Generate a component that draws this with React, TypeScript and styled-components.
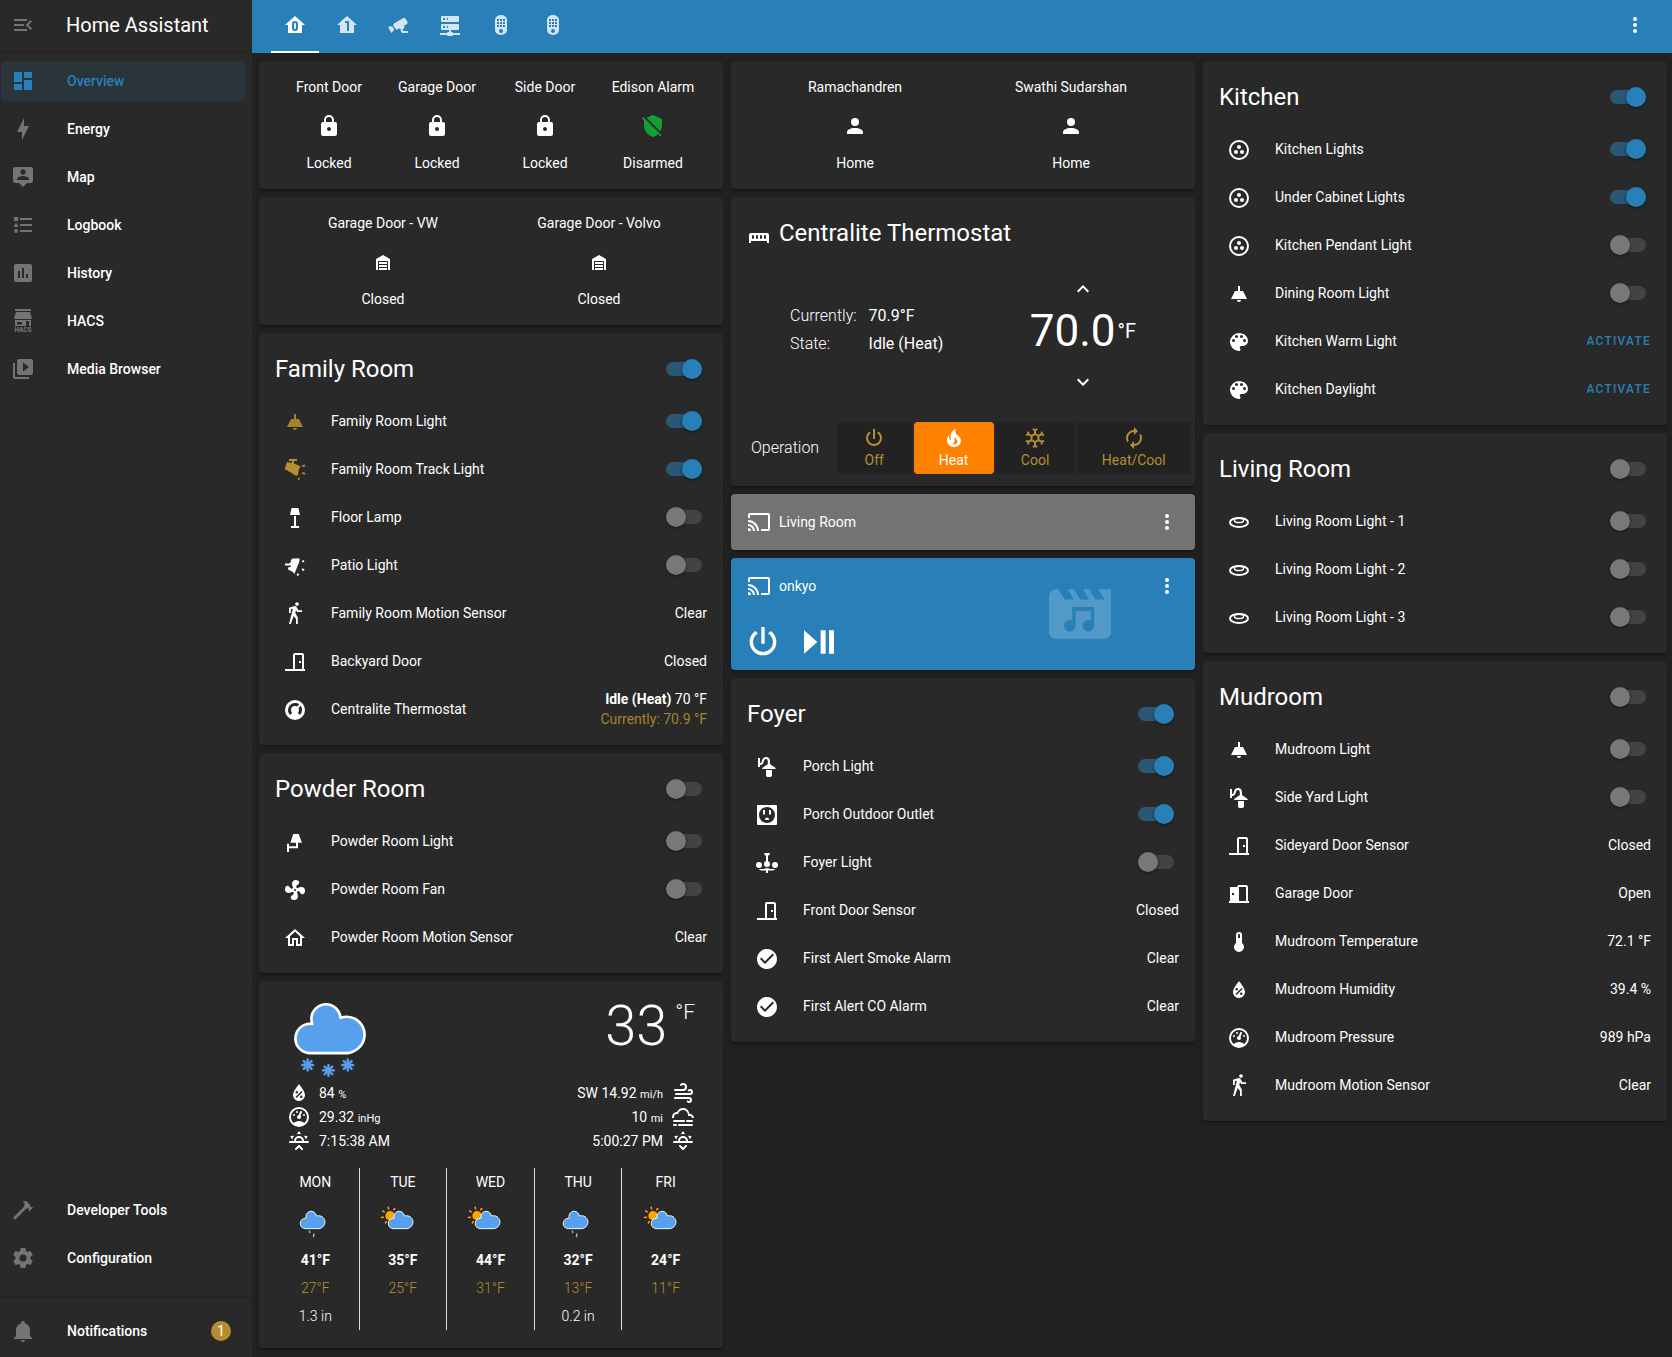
import React, { useId } from "react";
import styled, { createGlobalStyle, css } from "styled-components";

const color = {
  page: "#212121",
  card: "#292929",
  primary: "#2980b9",
  text: "#ffffff",
  muted: "#747474",
  gold: "#b58e31",
  goldDim: "#a5822c",
  green: "#12a035",
  line: "#222222",
};

const GlobalStyle = createGlobalStyle`
  * { box-sizing: border-box; }
  body {
    margin: 0;
    background: ${color.page};
    color: ${color.text};
    font-family: Roboto, "Liberation Sans", sans-serif;
    font-size: 14px;
    line-height: 20px;
  }
  h1, h2, p, ul, dl, dd { margin: 0; padding: 0; font-weight: 400; }
  ul { list-style: none; }
  button { font: inherit; color: inherit; background: none; border: 0; padding: 0; cursor: pointer; }
  a { color: inherit; text-decoration: none; }
`;

/* ---------- icons (24 × 24 grid) ---------- */

const paths: Record<string, string> = {
  menuOpen:
    "M21,15.61L19.59,17L14.58,12L19.59,7L21,8.39L17.44,12L21,15.61M3,6H16V8H3V6M3,13V11H13V13H3M3,18V16H16V18H3Z",
  dashboard: "M13,3V9H21V3M13,21H21V11H13M3,21H11V15H3M3,13H11V3H3V13Z",
  bolt: "M11 15H6L13 1V9H18L11 23V15Z",
  map: "M20,2H4A2,2 0 0,0 2,4V16A2,2 0 0,0 4,18H8L12,22L16,18H20A2,2 0 0,0 22,16V4A2,2 0 0,0 20,2M12,4.3C13.5,4.3 14.7,5.5 14.7,7C14.7,8.5 13.5,9.7 12,9.7C10.5,9.7 9.3,8.5 9.3,7C9.3,5.5 10.5,4.3 12,4.3M18,15H6V14.1C6,12.1 10,11 12,11C14,11 18,12.1 18,14.1V15Z",
  logbook:
    "M5,9.5L7.5,14H2.5L5,9.5M3,4H7V8H3V4M5,20A2,2 0 0,0 7,18A2,2 0 0,0 5,16A2,2 0 0,0 3,18A2,2 0 0,0 5,20M9,5V7H21V5H9M9,19H21V17H9V19M9,13H21V11H9V13Z",
  history:
    "M9 17H7V10H9V17M13 17H11V7H13V17M17 17H15V13H17V17M19 3H5C3.89 3 3 3.89 3 5V19A2 2 0 0 0 5 21H19A2 2 0 0 0 21 19V5A2 2 0 0 0 19 3Z",
  media:
    "M4,6H2V20A2,2 0 0,0 4,22H18V20H4V6M20,2H8A2,2 0 0,0 6,4V16A2,2 0 0,0 8,18H20A2,2 0 0,0 22,16V4A2,2 0 0,0 20,2M12,14.5V5.5L18,10L12,14.5Z",
  hammer:
    "M2,19.63L13.43,8.2L12.72,7.5L14.14,6.07L12,3.89C13.2,2.7 15.09,2.7 16.27,3.89L19.87,7.5L18.45,8.91H21.29L22,9.62L18.45,13.21L17.74,12.5V9.62L16.27,11.04L15.56,10.33L4.13,21.76L2,19.63Z",
  cog: "M12,15.5A3.5,3.5 0 0,1 8.5,12A3.5,3.5 0 0,1 12,8.5A3.5,3.5 0 0,1 15.5,12A3.5,3.5 0 0,1 12,15.5M19.43,12.97C19.47,12.65 19.5,12.33 19.5,12C19.5,11.67 19.47,11.34 19.43,11L21.54,9.37C21.73,9.22 21.78,8.95 21.66,8.73L19.66,5.27C19.54,5.05 19.27,4.96 19.05,5.05L16.56,6.05C16.04,5.66 15.5,5.32 14.87,5.07L14.5,2.42C14.46,2.18 14.25,2 14,2H10C9.75,2 9.54,2.18 9.5,2.42L9.13,5.07C8.5,5.32 7.96,5.66 7.44,6.05L4.95,5.05C4.73,4.96 4.46,5.05 4.34,5.27L2.34,8.73C2.21,8.95 2.27,9.22 2.46,9.37L4.57,11C4.53,11.34 4.5,11.67 4.5,12C4.5,12.33 4.53,12.65 4.57,12.97L2.46,14.63C2.27,14.78 2.21,15.05 2.34,15.27L4.34,18.73C4.46,18.95 4.73,19.03 4.95,18.95L7.44,17.94C7.96,18.34 8.5,18.68 9.13,18.93L9.5,21.58C9.54,21.82 9.75,22 10,22H14C14.25,22 14.46,21.82 14.5,21.58L14.87,18.93C15.5,18.67 16.04,18.34 16.56,17.94L19.05,18.95C19.27,19.03 19.54,18.95 19.66,18.73L21.66,15.27C21.78,15.05 21.73,14.78 21.54,14.63L19.43,12.97Z",
  bell: "M21,19V20H3V19L5,17V11C5,7.9 7.03,5.17 10,4.29C10,4.19 10,4.1 10,4A2,2 0 0,1 12,2A2,2 0 0,1 14,4C14,4.1 14,4.19 14,4.29C16.97,5.17 19,7.9 19,11V17L21,19M14,21A2,2 0 0,1 12,23A2,2 0 0,1 10,21",
  floor0:
    "M12,10A1,1 0 0,0 11,11V15A1,1 0 0,0 12,16A1,1 0 0,0 13,15V11A1,1 0 0,0 12,10M22,12H19V20H5V12H2L12,3L22,12M15,11A3,3 0 0,0 9,11V15A3,3 0 0,0 15,15V11Z",
  floor1: "M12,3L2,12H5V20H19V12H22L12,3M10,8H14V18H12V10H10V8Z",
  cctv: "M18.15,4.94C17.77,4.91 17.37,5 17,5.2L8.35,10.2C7.39,10.76 7.07,12 7.62,12.94L9.12,15.53C9.67,16.5 10.89,16.82 11.85,16.27L13.65,15.23C13.92,15.69 14.32,16.06 14.81,16.27V18.04C14.81,19.13 15.7,20 16.81,20H22V18.04H16.81V16.27C17.72,15.87 18.31,14.97 18.31,14C18.31,13.54 18.19,13.11 17.97,12.73L20.5,11.27C21.47,10.71 21.8,9.5 21.24,8.53L19.74,5.94C19.4,5.34 18.79,5 18.15,4.94M6.22,13.17L2,13.87L2.75,15.17L4.75,18.63L5.5,19.93L8.22,16.63L6.22,13.17Z",
  server:
    "M13,19H14A1,1 0 0,1 15,20H22V22H15A1,1 0 0,1 14,23H10A1,1 0 0,1 9,22H2V20H9A1,1 0 0,1 10,19H11V17H4A1,1 0 0,1 3,16V12A1,1 0 0,1 4,11H20A1,1 0 0,1 21,12V16A1,1 0 0,1 20,17H13V19M4,3H20A1,1 0 0,1 21,4V8A1,1 0 0,1 20,9H4A1,1 0 0,1 3,8V4A1,1 0 0,1 4,3M9,7H10V5H9V7M9,15H10V13H9V15M5,5V7H7V5H5M5,13V15H7V13H5Z",
  remote:
    "M12,2A6,5 0 0,1 18,7V17A6,5 0 0,1 6,17V7A6,5 0 0,1 12,2M8,6V8H10V6H8M11,6V8H13V6H11M14,6V8H16V6H14M8,9V11H10V9H8M11,9V11H13V9H11M14,9V11H16V9H14M8,12V14H10V12H8M11,12V14H13V12H11M14,12V14H16V12H14M12,16A2,2 0 1,0 12,20A2,2 0 1,0 12,16Z",
  dots: "M12,16A2,2 0 0,1 14,18A2,2 0 0,1 12,20A2,2 0 0,1 10,18A2,2 0 0,1 12,16M12,10A2,2 0 0,1 14,12A2,2 0 0,1 12,14A2,2 0 0,1 10,12A2,2 0 0,1 12,10M12,4A2,2 0 0,1 14,6A2,2 0 0,1 12,8A2,2 0 0,1 10,6A2,2 0 0,1 12,4Z",
  lock: "M12,17A2,2 0 0,0 14,15C14,13.89 13.1,13 12,13A2,2 0 0,0 10,15A2,2 0 0,0 12,17M18,8A2,2 0 0,1 20,10V20A2,2 0 0,1 18,22H6A2,2 0 0,1 4,20V10C4,8.89 4.9,8 6,8H7V6A5,5 0 0,1 12,1A5,5 0 0,1 17,6V8H18M12,3A3,3 0 0,0 9,6V8H15V6A3,3 0 0,0 12,3Z",
  shieldOff:
    "M1,4.27L2.28,3L20.5,21.22L19.23,22.5L17,20.25C15.57,21.6 13.87,22.54 12,23C6.84,21.74 3,16.55 3,11V6.27L1,4.27M12,1L21,5V11C21,13.28 20.35,15.5 19.23,17.41L5.65,3.82L12,1Z",
  garage:
    "M19,20H17V11H7V20H5V9L12,5L19,9V20M8,12H16V14H8V12M8,15H16V17H8V15M16,18V20H8V18H16Z",
  account:
    "M12,4A4,4 0 0,1 16,8A4,4 0 0,1 12,12A4,4 0 0,1 8,8A4,4 0 0,1 12,4M12,14C16.42,14 20,15.79 20,18V20H4V18C4,15.79 7.58,14 12,14Z",
  ceilingLight: "M8,9H11V4H13V9H16L20,17H4L8,9M14,18A2,2 0 0,1 12,20A2,2 0 0,1 10,18H14Z",
  trackLight:
    "M6,1H14V3H11V5.6L17.5,8.2L15.6,12.6L15.2,16.6L13.3,18L7.8,14.6L1.6,11L4,4L9,5V3H6V1M19,7.6L21.6,6.6L22.3,8.3L19.7,9.3L19,7.6M19.6,14L22.3,15L21.7,16.8L19,15.8L19.6,14M14.6,20L16.4,19.6L17,21.4L15.3,22L14.6,20Z",
  floorLamp: "M8.6,2H15.4L17,9H7L8.6,2M11,10H13V20H16V22H8V20H11V10Z",
  spotlight:
    "M9.5,4.6L16.6,4.4L16.4,7.5L11.4,20L9.6,17.8L5,15.4L5.2,13.4L8,12.6V11.5H2V9.5H6.6L7,8.4L8.2,8L7.6,6.4L9.5,4.6M14.2,4L16,4.6L15,6.4L14.2,4M18.8,7L20.6,5.9L21.5,7.4L19.6,8.4L18.8,7M19.2,14.2L21.6,15.2L20.9,17L18.7,16L19.2,14.2M13.6,20L15.2,19.2L16.2,21L14.6,22L13.6,20Z",
  walk: "M14.12,10H19V8.2H15.38L13.38,4.87C13.08,4.37 12.54,4.03 11.92,4.03C11.74,4.03 11.58,4.06 11.42,4.11L6,5.8V11H7.8V7.33L9.91,6.67L6,22H7.8L10.67,13.89L13,17V22H14.8V15.59L12.31,11.05L13.04,8.18M14,3.8C15,3.8 15.8,3 15.8,2C15.8,1 15,0.2 14,0.2C13,0.2 12.2,1 12.2,2C12.2,3 13,3.8 14,3.8Z",
  doorClosed:
    "M16,11H18V13H16V11M12,3H19C20.11,3 21,3.89 21,5V19H22V21H2V19H10V5C10,3.89 10.89,3 12,3M12,5V19H19V5H12Z",
  doorOpen:
    "M12,3C10.89,3 10,3.89 10,5H3V19H2V21H22V19H21V5C21,3.89 20.11,3 19,3H12M12,5H19V19H12V5M5,11H7V13H5V11Z",
  thermostat:
    "M16.95,16.95L14.83,14.83C15.55,14.1 16,13.1 16,12C16,11.26 15.79,10.57 15.43,10L17.6,7.81C18.5,9 19,10.43 19,12C19,13.93 18.22,15.68 16.95,16.95M12,5C13.57,5 15,5.5 16.19,6.4L14,8.56C13.43,8.21 12.74,8 12,8A4,4 0 0,0 8,12C8,13.1 8.45,14.1 9.17,14.83L7.05,16.95C5.78,15.68 5,13.93 5,12A7,7 0 0,1 12,5M12,2A10,10 0 0,0 2,12A10,10 0 0,0 12,22A10,10 0 0,0 22,12A10,10 0 0,0 12,2Z",
  sconce: "M10.3,4H15.7L19,12.8H15V18.3H6V22H4V13.8H6V16.3H13V12.8H7.3L10.3,4Z",
  fan: "M12,11A1,1 0 0,0 11,12A1,1 0 0,0 12,13A1,1 0 0,0 13,12A1,1 0 0,0 12,11M12.5,2C17,2 17.11,5.57 14.75,6.75C13.76,7.24 13.32,8.29 13.13,9.22C13.61,9.42 14.03,9.73 14.35,10.13C18.05,8.13 22.03,8.92 22.03,12.5C22.03,17 18.46,17.1 17.28,14.73C16.78,13.74 15.72,13.3 14.79,13.11C14.59,13.59 14.28,14 13.88,14.34C15.87,18.03 15.08,22 11.5,22C7,22 6.91,18.42 9.27,17.24C10.25,16.75 10.69,15.71 10.89,14.79C10.4,14.59 9.97,14.27 9.65,13.87C5.96,15.85 2,15.07 2,11.5C2,7 5.56,6.89 6.74,9.26C7.24,10.25 8.29,10.68 9.22,10.87C9.41,10.39 9.73,9.97 10.14,9.65C8.15,5.96 8.94,2 12.5,2Z",
  home: "M12 5.69L17 10.19V18H15V12H9V18H7V10.19L12 5.69M12 3L2 12H5V20H11V14H13V20H19V12H22",
  humidity:
    "M12,3.25C12,3.25 6,10 6,14C6,17.32 8.69,20 12,20A6,6 0 0,0 18,14C18,10 12,3.25 12,3.25M14.47,9.97L15.53,11.03L9.53,17.03L8.47,15.97M9.75,10A1.25,1.25 0 0,1 11,11.25A1.25,1.25 0 0,1 9.75,12.5A1.25,1.25 0 0,1 8.5,11.25A1.25,1.25 0 0,1 9.75,10M14.25,14.5A1.25,1.25 0 0,1 15.5,15.75A1.25,1.25 0 0,1 14.25,17A1.25,1.25 0 0,1 13,15.75A1.25,1.25 0 0,1 14.25,14.5Z",
  gauge:
    "M12,2A10,10 0 0,0 2,12A10,10 0 0,0 12,22A10,10 0 0,0 22,12A10,10 0 0,0 12,2M12,4A8,8 0 0,1 20,12C20,14.4 19,16.5 17.3,18C15.9,16.7 14,16 12,16C10,16 8.2,16.7 6.7,18C5,16.5 4,14.4 4,12A8,8 0 0,1 12,4M14,5.89C13.62,5.9 13.26,6.15 13.1,6.54L11.81,9.77L11.71,10C11,10.13 10.41,10.6 10.14,11.26C9.73,12.29 10.23,13.45 11.26,13.86C12.29,14.27 13.45,13.77 13.86,12.74C14.12,12.08 14,11.32 13.57,10.76L13.67,10.5L14.96,7.29L14.97,7.26C15.17,6.75 14.92,6.17 14.41,5.96C14.28,5.91 14.15,5.89 14,5.89M10,6A1,1 0 0,0 9,7A1,1 0 0,0 10,8A1,1 0 0,0 11,7A1,1 0 0,0 10,6M7,9A1,1 0 0,0 6,10A1,1 0 0,0 7,11A1,1 0 0,0 8,10A1,1 0 0,0 7,9M17,9A1,1 0 0,0 16,10A1,1 0 0,0 17,11A1,1 0 0,0 18,10A1,1 0 0,0 17,9Z",
  sunrise:
    "M3,12H7A5,5 0 0,1 12,7A5,5 0 0,1 17,12H21A1,1 0 0,1 22,13A1,1 0 0,1 21,14H3A1,1 0 0,1 2,13A1,1 0 0,1 3,12M15,12A3,3 0 0,0 12,9A3,3 0 0,0 9,12H15M12,2L14.39,5.42C13.65,5.15 12.84,5 12,5C11.16,5 10.35,5.15 9.61,5.42L12,2M3.34,7L7.5,6.65C6.9,7.16 6.36,7.78 5.94,8.5C5.5,9.24 5.25,10 5.11,10.79L3.34,7M20.65,7L18.88,10.79C18.74,10 18.47,9.23 18.05,8.5C17.63,7.78 17.1,7.15 16.5,6.64L20.65,7M12.71,16.3L15.82,19.41C16.21,19.8 16.21,20.43 15.82,20.82C15.43,21.21 14.8,21.21 14.41,20.82L12,18.41L9.59,20.82C9.2,21.21 8.57,21.21 8.18,20.82C7.79,20.43 7.79,19.8 8.18,19.41L11.29,16.3C11.5,16.1 11.74,16 12,16C12.26,16 12.5,16.1 12.71,16.3Z",
  sunset:
    "M3,12H7A5,5 0 0,1 12,7A5,5 0 0,1 17,12H21A1,1 0 0,1 22,13A1,1 0 0,1 21,14H3A1,1 0 0,1 2,13A1,1 0 0,1 3,12M15,12A3,3 0 0,0 12,9A3,3 0 0,0 9,12H15M12,2L14.39,5.42C13.65,5.15 12.84,5 12,5C11.16,5 10.35,5.15 9.61,5.42L12,2M3.34,7L7.5,6.65C6.9,7.16 6.36,7.78 5.94,8.5C5.5,9.24 5.25,10 5.11,10.79L3.34,7M20.65,7L18.88,10.79C18.74,10 18.47,9.23 18.05,8.5C17.63,7.78 17.1,7.15 16.5,6.64L20.65,7M12.71,20.71L15.82,17.6C16.21,17.21 16.21,16.57 15.82,16.18C15.43,15.79 14.8,15.79 14.41,16.18L12,18.59L9.59,16.18C9.2,15.79 8.57,15.79 8.18,16.18C7.79,16.57 7.79,17.21 8.18,17.6L11.29,20.71C11.5,20.9 11.74,21 12,21C12.26,21 12.5,20.9 12.71,20.71Z",
  wind: "M4,10A1,1 0 0,1 3,9A1,1 0 0,1 4,8H12A2,2 0 0,0 14,6A2,2 0 0,0 12,4C11.45,4 10.95,4.22 10.59,4.59C10.2,5 9.56,5 9.17,4.59C8.78,4.2 8.78,3.56 9.17,3.17C9.9,2.45 10.9,2 12,2A4,4 0 0,1 16,6A4,4 0 0,1 12,10H4M19,12A1,1 0 0,0 20,11A1,1 0 0,0 19,10C18.72,10 18.47,10.11 18.29,10.29C17.9,10.68 17.27,10.68 16.88,10.29C16.5,9.9 16.5,9.27 16.88,8.88C17.42,8.34 18.17,8 19,8A3,3 0 0,1 22,11A3,3 0 0,1 19,14H5A1,1 0 0,1 4,13A1,1 0 0,1 5,12H19M18,18H4A1,1 0 0,1 3,17A1,1 0 0,1 4,16H18A3,3 0 0,1 21,19A3,3 0 0,1 18,22C17.17,22 16.42,21.66 15.88,21.12C15.5,20.73 15.5,20.1 15.88,19.71C16.27,19.32 16.9,19.32 17.29,19.71C17.47,19.89 17.72,20 18,20A1,1 0 0,0 19,19A1,1 0 0,0 18,18Z",
  fog: "M3,15H13A1,1 0 0,1 14,16A1,1 0 0,1 13,17H3A1,1 0 0,1 2,16A1,1 0 0,1 3,15M16,15H21A1,1 0 0,1 22,16A1,1 0 0,1 21,17H16A1,1 0 0,1 15,16A1,1 0 0,1 16,15M1,12A5,5 0 0,1 6,7C7,4.65 9.3,3 12,3C15.43,3 18.24,5.66 18.5,9.03L19,9C21.19,9 22.97,10.76 23,13H21A2,2 0 0,0 19,11H17V10A5,5 0 0,0 12,5C9.5,5 7.45,6.82 7.06,9.19C6.73,9.07 6.37,9 6,9A3,3 0 0,0 3,12C3,12.35 3.06,12.69 3.17,13H1.1L1,12M3,19H5A1,1 0 0,1 6,20A1,1 0 0,1 5,21H3A1,1 0 0,1 2,20A1,1 0 0,1 3,19M8,19H21A1,1 0 0,1 22,20A1,1 0 0,1 21,21H8A1,1 0 0,1 7,20A1,1 0 0,1 8,19Z",
  radiator:
    "M22,14V22H20V20H4V22H2V14A2,2 0 0,1 4,12H20A2,2 0 0,1 22,14M6,14A1,1 0 0,0 5,15V17A1,1 0 0,0 6,18A1,1 0 0,0 7,17V15A1,1 0 0,0 6,14M10,14A1,1 0 0,0 9,15V17A1,1 0 0,0 10,18A1,1 0 0,0 11,17V15A1,1 0 0,0 10,14M14,14A1,1 0 0,0 13,15V17A1,1 0 0,0 14,18A1,1 0 0,0 15,17V15A1,1 0 0,0 14,14M18,14A1,1 0 0,0 17,15V17A1,1 0 0,0 18,18A1,1 0 0,0 19,17V15A1,1 0 0,0 18,14Z",
  chevronUp: "M7.41,15.41L12,10.83L16.59,15.41L18,14L12,8L6,14L7.41,15.41Z",
  chevronDown: "M7.41,8.58L12,13.17L16.59,8.58L18,10L12,16L6,10L7.41,8.58Z",
  power:
    "M16.56,5.44L15.11,6.89C16.84,7.94 18,9.83 18,12A6,6 0 0,1 12,18A6,6 0 0,1 6,12C6,9.83 7.16,7.94 8.88,6.88L7.44,5.44C5.36,6.88 4,9.28 4,12A8,8 0 0,0 12,20A8,8 0 0,0 20,12C20,9.28 18.64,6.88 16.56,5.44M13,3H11V13H13",
  fire: "M17.66 11.2C17.43 10.9 17.15 10.64 16.89 10.38C16.22 9.78 15.46 9.35 14.82 8.72C13.33 7.26 13 4.85 13.95 3C13 3.23 12.17 3.75 11.46 4.32C8.87 6.4 7.85 10.07 9.07 13.22C9.11 13.32 9.15 13.42 9.15 13.55C9.15 13.77 9 13.97 8.8 14.05C8.57 14.15 8.33 14.09 8.14 13.93C8.08 13.88 8.04 13.83 8 13.76C6.87 12.33 6.69 10.28 7.45 8.64C5.78 10 4.87 12.3 5 14.47C5.06 14.97 5.12 15.47 5.29 15.97C5.43 16.57 5.7 17.17 6 17.7C7.08 19.43 8.95 20.67 10.96 20.92C13.1 21.19 15.39 20.8 17.03 19.32C18.86 17.66 19.5 15 18.56 12.72L18.43 12.46C18.22 12 17.66 11.2 17.66 11.2M14.5 17.5C14.22 17.74 13.76 18 13.4 18.1C12.28 18.5 11.16 17.94 10.5 17.28C11.69 17 12.4 16.12 12.61 15.23C12.78 14.43 12.46 13.77 12.33 13C12.21 12.26 12.23 11.63 12.5 10.94C12.69 11.32 12.89 11.7 13.13 12C13.9 13 15.11 13.44 15.37 14.8C15.41 14.94 15.43 15.08 15.43 15.23C15.46 16.05 15.1 16.95 14.5 17.5H14.5Z",
  snowflake:
    "M20.79,13.95L18.46,14.57L16.46,13.44V10.56L18.46,9.43L20.79,10.05L21.31,8.12L19.54,7.65L20,5.88L18.07,5.36L17.45,7.69L15.45,8.82L13,7.38V5.12L14.71,3.41L13.29,2L12,3.29L10.71,2L9.29,3.41L11,5.12V7.38L8.5,8.82L6.5,7.69L5.92,5.36L4,5.88L4.47,7.65L2.7,8.12L3.22,10.05L5.55,9.43L7.55,10.56V13.45L5.55,14.58L3.22,13.96L2.7,15.89L4.47,16.36L4,18.12L5.93,18.64L6.55,16.31L8.55,15.18L11,16.62V18.88L9.29,20.59L10.71,22L12,20.71L13.29,22L14.7,20.59L13,18.88V16.62L15.5,15.17L17.5,16.3L18.12,18.63L20,18.12L19.53,16.35L21.3,15.88L20.79,13.95M9.5,10.56L12,9.11L14.5,10.56V13.44L12,14.89L9.5,13.44V10.56Z",
  autorenew:
    "M12,6V9L16,5L12,1V4A8,8 0 0,0 4,12C4,13.57 4.46,15.03 5.24,16.26L6.7,14.8C6.25,13.97 6,13 6,12A6,6 0 0,1 12,6M18.76,7.74L17.3,9.2C17.74,10.04 18,11 18,12A6,6 0 0,1 12,18V15L8,19L12,23V20A8,8 0 0,0 20,12C20,10.43 19.54,8.97 18.76,7.74Z",
  cast: "M1,10V12A9,9 0 0,1 10,21H12C12,14.92 7.07,10 1,10M1,14V16A5,5 0 0,1 6,21H8A7,7 0 0,0 1,14M1,18V21H4A3,3 0 0,0 1,18M21,3H3C1.89,3 1,3.89 1,5V8H3V5H21V19H14V21H21A2,2 0 0,0 23,19V5C23,3.89 22.1,3 21,3Z",
  playPause: "M3,5V19L11,12M13,19H16V5H13M18,5V19H21V5",
  movieMusic:
    "M18,4L20,7.3H17L15,4H13L15,7.3H12L10,4H8L10,7.3H7L5,4H4A2,2 0 0,0 2,6V18A2,2 0 0,0 4,20H20A2,2 0 0,0 22,18V4H18M16.6,9.7V15.9A1.9,1.9 0 1,1 15.5,14.1V11H10.6V15.9A1.9,1.9 0 1,1 9.5,14.1V9.7H16.6Z",
  outlet:
    "M3,2H21A1,1 0 0,1 22,3V21A1,1 0 0,1 21,22H3A1,1 0 0,1 2,21V3A1,1 0 0,1 3,2M12,4A8,8 0 1,0 12,20A8,8 0 1,0 12,4M8,7H10V11.5H8V7M14,7H16V11.5H14V7M12,14.6A2,2 0 0,1 14,16.6V17H10V16.6A2,2 0 0,1 12,14.6Z",
  check:
    "M12 2C6.5 2 2 6.5 2 12S6.5 22 12 22 22 17.5 22 12 17.5 2 12 2M10 17L5 12L6.41 10.59L10 14.17L17.59 6.58L19 8L10 17Z",
  group:
    "M15,12C13.89,12 13,12.89 13,14A2,2 0 0,0 15,16A2,2 0 0,0 17,14C17,12.89 16.1,12 15,12M12,20A8,8 0 0,1 4,12A8,8 0 0,1 12,4A8,8 0 0,1 20,12A8,8 0 0,1 12,20M12,2A10,10 0 0,0 2,12A10,10 0 0,0 12,22A10,10 0 0,0 22,12A10,10 0 0,0 12,2M14,9C14,7.89 13.1,7 12,7A2,2 0 0,0 10,9A2,2 0 0,0 12,11A2,2 0 0,0 14,9M9,12A2,2 0 0,0 7,14A2,2 0 0,0 9,16C10.11,16 11,15.1 11,14C11,12.89 10.1,12 9,12Z",
  palette:
    "M17.5,12A1.5,1.5 0 0,1 16,10.5A1.5,1.5 0 0,1 17.5,9A1.5,1.5 0 0,1 19,10.5A1.5,1.5 0 0,1 17.5,12M14.5,8A1.5,1.5 0 0,1 13,6.5A1.5,1.5 0 0,1 14.5,5A1.5,1.5 0 0,1 16,6.5A1.5,1.5 0 0,1 14.5,8M9.5,8A1.5,1.5 0 0,1 8,6.5A1.5,1.5 0 0,1 9.5,5A1.5,1.5 0 0,1 11,6.5A1.5,1.5 0 0,1 9.5,8M6.5,12A1.5,1.5 0 0,1 5,10.5A1.5,1.5 0 0,1 6.5,9A1.5,1.5 0 0,1 8,10.5A1.5,1.5 0 0,1 6.5,12M12,3A9,9 0 0,0 3,12A9,9 0 0,0 12,21A1.5,1.5 0 0,0 13.5,19.5C13.5,19.11 13.35,18.76 13.11,18.5C12.88,18.23 12.73,17.88 12.73,17.5A1.5,1.5 0 0,1 14.23,16H16A5,5 0 0,0 21,11C21,6.58 16.97,3 12,3Z",
  thermometer:
    "M15 13V5A3 3 0 0 0 9 5V13A5 5 0 1 0 15 13M12 4A1 1 0 0 1 13 5V8H11V5A1 1 0 0 1 12 4Z",
};

const drawings: Record<string, React.ReactNode> = {
  coachLamp: (
    <>
      <path d="M3,3H5V8C6.2,8 6.4,7.4 6.8,6C7.4,3.6 8.6,2 11,2C13.8,2 15,4 15,6.6V9L20.6,13V14H7.2V13L12.8,9V6.6C12.8,5 12.2,4 11,4C9.8,4 9.2,5 8.8,6.6C8.2,9 7.4,10 5,10V12H3V3Z" />
      <path d="M11,15H17V20.5L16,22H12L11,20.5V15Z" />
    </>
  ),
  chandelier: (
    <>
      <path d="M9,2H15L14,4.5H13V10.5H11V4.5H10L9,2Z" />
      <circle cx="4" cy="14" r="3" />
      <circle cx="12" cy="13" r="3" />
      <circle cx="20" cy="14" r="3" />
      <path d="M3.5,18H8.5L11,17.2H13L15.5,18H20.5L18,19.6H13V22H11V19.6H6L3.5,18Z" />
    </>
  ),
  recessed: (
    <g fill="none" stroke="currentColor">
      <ellipse cx="12" cy="12.4" rx="9" ry="4.5" strokeWidth="2" />
      <ellipse cx="12" cy="10.4" rx="4.6" ry="2.1" strokeWidth="1.4" />
    </g>
  ),
  hacs: (
    <>
      <rect x="4" y="0" width="16" height="2" />
      <path d="M5,3H19L20.6,8V10H3.4V8L5,3Z" />
      <path d="M4,11H20V17H18V12H15V17H4V11M6,13V15.5H11V13H6Z" fillRule="evenodd" />
      <text x="12" y="23" textAnchor="middle" fontSize="6.4" fontWeight="900" fontFamily="Roboto, sans-serif">
        HACS
      </text>
    </>
  ),
};

const Svg = styled.svg<{ $size: number }>`
  display: block;
  flex: none;
  width: ${(p) => p.$size}px;
  height: ${(p) => p.$size}px;
  fill: currentColor;
`;

function Icon({ name, size = 24 }: { name: string; size?: number }) {
  return (
    <Svg $size={size} viewBox="0 0 24 24" aria-hidden="true">
      {drawings[name] ?? <path d={paths[name]} />}
    </Svg>
  );
}

/* ---------- shell ---------- */

const Shell = styled.div`
  display: grid;
  grid-template-columns: 252px minmax(0, 1fr);
  min-height: 100vh;
`;

const Sidebar = styled.aside`
  position: sticky;
  top: 0;
  height: 100vh;
  display: flex;
  flex-direction: column;
  background: ${color.card};
`;

const Brand = styled.div`
  display: flex;
  align-items: center;
  gap: 31px;
  height: 53px;
  padding: 0 11px 3px;
  border-bottom: 1px solid ${color.line};
  font-size: 20px;
  line-height: 28px;
`;

const MenuButton = styled.button`
  && { color: ${color.muted}; }
`;

const NavList = styled.ul<{ $grow?: boolean }>`
  display: flex;
  flex-direction: column;
  gap: 8px;
  padding: 8px 7px 0 1px;
  ${(p) => p.$grow && css`flex: 1;`}
`;

const NavFooter = styled(NavList)`
  margin-top: 18px;
  padding: 14px 7px 6px 1px;
  border-top: 1px solid ${color.line};
`;

const NavLink = styled.a<{ $active?: boolean }>`
  display: flex;
  align-items: center;
  gap: 32px;
  height: 40px;
  padding: 0 14px 0 10px;
  border-radius: 4px;
  font-weight: 500;
  color: ${(p) => (p.$active ? color.primary : color.text)};
  background: ${(p) => (p.$active ? "#2a343b" : "transparent")};
  svg { color: ${(p) => (p.$active ? color.primary : color.muted)}; }
`;

const NavText = styled.span`
  flex: 1;
`;

const Badge = styled.span`
  width: 20px;
  height: 20px;
  border-radius: 50%;
  background: ${color.gold};
  text-align: center;
  font-weight: 400;
`;

const TopBar = styled.header`
  display: flex;
  justify-content: space-between;
  height: 53px;
  padding: 0 25px 0 19px;
  background: ${color.primary};
`;

const Tabs = styled.nav`
  display: flex;
  justify-content: space-between;
  width: 306px;
`;

const Tab = styled.button<{ $active?: boolean }>`
  display: flex;
  justify-content: center;
  width: 48px;
  padding: 13px 0 14px;
  border-bottom: 2px solid ${(p) => (p.$active ? "#fff" : "transparent")};
  svg { opacity: ${(p) => (p.$active ? 1 : 0.8)}; }
`;

const OverflowButton = styled.button`
  display: flex;
  align-items: center;
  padding-bottom: 3px;
`;

const Board = styled.main`
  display: grid;
  grid-template-columns: repeat(3, minmax(0, 1fr));
  align-items: start;
  gap: 8px;
  padding: 8px 5px 8px 7px;
  @media (max-width: 1100px) { grid-template-columns: minmax(0, 1fr); }
`;

const Column = styled.div`
  display: flex;
  flex-direction: column;
  gap: 8px;
`;

const Card = styled.section`
  background: ${color.card};
  border-radius: 4px;
  box-shadow: 0 2px 2px rgba(0, 0, 0, 0.14), 0 1px 5px rgba(0, 0, 0, 0.12), 0 3px 1px -2px rgba(0, 0, 0, 0.2);
`;

/* ---------- glance card ---------- */

const GlanceGrid = styled(Card)`
  display: flex;
  padding: 16px;
`;

const GlanceItem = styled.div`
  flex: 1;
  text-align: center;
`;

const IconSlot = styled.span<{ $tint?: string }>`
  display: flex;
  justify-content: center;
  align-items: center;
  width: 40px;
  height: 40px;
  padding-top: 2px;
  color: ${(p) => p.$tint ?? color.text};
`;

const GlanceIcon = styled(IconSlot)`
  margin: 8px auto;
`;

type GlanceEntry = { name: string; icon: string; state: string; tint?: string };

function Glance({ items }: { items: GlanceEntry[] }) {
  return (
    <GlanceGrid>
      {items.map((it) => (
        <GlanceItem key={it.name}>
          <div>{it.name}</div>
          <GlanceIcon $tint={it.tint}>
            <Icon name={it.icon} />
          </GlanceIcon>
          <div>{it.state}</div>
        </GlanceItem>
      ))}
    </GlanceGrid>
  );
}

/* ---------- entities card ---------- */

const CardHeader = styled.div`
  display: flex;
  align-items: center;
  justify-content: space-between;
  padding: 12px 21px 8px 16px;
`;

const CardTitle = styled.h2`
  font-size: 24px;
  line-height: 48px;
`;

const Rows = styled.ul`
  display: flex;
  flex-direction: column;
  gap: 8px;
  padding: 0 16px 16px;
`;

const Row = styled.li`
  display: flex;
  align-items: center;
  height: 40px;
`;

const RowName = styled.label`
  flex: 1;
  padding-left: 16px;
`;

const RowState = styled.div`
  text-align: right;
`;

const Strong = styled.strong`
  font-weight: 700;
`;

const Dim = styled.div`
  color: ${color.goldDim};
`;

const Switch = styled.input.attrs({ type: "checkbox" })`
  appearance: none;
  display: flex;
  align-items: center;
  flex: none;
  width: 36px;
  height: 14px;
  margin: 0;
  border-radius: 7px;
  background: #434343;
  cursor: pointer;
  &::before {
    content: "";
    flex: none;
    width: 20px;
    height: 20px;
    border-radius: 50%;
    background: #787878;
    box-shadow: 0 1px 3px rgba(0, 0, 0, 0.5);
  }
  &:checked {
    justify-content: flex-end;
    background: #2a5775;
  }
  &:checked::before { background: ${color.primary}; }
`;

const RowSwitch = styled(Switch)`
  margin-right: 5px;
`;

const Activate = styled.button`
  && { color: ${color.primary}; }
  font-size: 12px;
  font-weight: 500;
  letter-spacing: 0.1em;
  text-transform: uppercase;
`;

type Entity = {
  name: string;
  icon: string;
  tint?: string;
  on?: boolean;
  state?: React.ReactNode;
  scene?: boolean;
};

function EntityRow({ e }: { e: Entity }) {
  const id = useId();
  const isSwitch = e.on !== undefined;
  return (
    <Row>
      <IconSlot $tint={e.tint}>
        <Icon name={e.icon} />
      </IconSlot>
      <RowName as={isSwitch ? "label" : "span"} htmlFor={isSwitch ? id : undefined}>
        {e.name}
      </RowName>
      {isSwitch && <RowSwitch id={id} defaultChecked={e.on} />}
      {e.scene && <Activate type="button">Activate</Activate>}
      {e.state && <RowState>{e.state}</RowState>}
    </Row>
  );
}

function Room({ title, on, items }: { title: string; on: boolean; items: Entity[] }) {
  const id = useId();
  return (
    <Card>
      <CardHeader>
        <CardTitle>
          <label htmlFor={id}>{title}</label>
        </CardTitle>
        <Switch id={id} defaultChecked={on} />
      </CardHeader>
      <Rows>
        {items.map((e) => (
          <EntityRow key={e.name} e={e} />
        ))}
      </Rows>
    </Card>
  );
}

/* ---------- thermostat card ---------- */

const ThermoHeader = styled(CardHeader)`
  justify-content: flex-start;
  gap: 8px;
  padding: 12px 16px 0;
`;

const ThermoBody = styled.div`
  display: flex;
  justify-content: space-between;
  align-items: flex-start;
  padding: 12px 59px 20px;
`;

const Readings = styled.dl`
  display: grid;
  grid-template-columns: auto auto;
  column-gap: 12px;
  margin-top: 33px;
  font-size: 16px;
  line-height: 28px;
  dt { font-weight: 300; }
`;

const SetPoint = styled.div`
  display: flex;
  flex-direction: column;
  align-items: center;
`;

const StepButton = styled.button`
  display: grid;
  place-items: center;
  width: 40px;
  height: 40px;
`;

const Target = styled.div`
  display: flex;
  align-items: center;
  gap: 2px;
  margin-bottom: 9px;
  font-size: 44px;
  line-height: 44px;
`;

const TargetUnit = styled.span`
  font-size: 20px;
  line-height: 28px;
`;

const Modes = styled.div`
  display: flex;
  gap: 2px;
  padding: 0 4px 12px 20px;
`;

const ModesLabel = styled.span`
  width: 84px;
  font-size: 16px;
  font-weight: 300;
  line-height: 52px;
`;

const ModeButton = styled.button<{ $active?: boolean }>`
  display: flex;
  flex-direction: column;
  align-items: center;
  flex: 1 1 auto;
  height: 52px;
  padding: 4px 0;
  border-radius: 4px;
  && {
    color: ${(p) => (p.$active ? "#fff" : color.gold)};
    background: ${(p) => (p.$active ? "#ff8100" : "#222222")};
  }
`;

const modes = [
  { name: "Off", icon: "power" },
  { name: "Heat", icon: "fire" },
  { name: "Cool", icon: "snowflake" },
  { name: "Heat/Cool", icon: "autorenew" },
];

function Thermostat() {
  return (
    <Card>
      <ThermoHeader>
        <Icon name="radiator" />
        <CardTitle>Centralite Thermostat</CardTitle>
      </ThermoHeader>
      <ThermoBody>
        <Readings>
          <dt>Currently:</dt>
          <dd>70.9°F</dd>
          <dt>State:</dt>
          <dd>Idle (Heat)</dd>
        </Readings>
        <SetPoint>
          <StepButton type="button" aria-label="Raise temperature">
            <Icon name="chevronUp" />
          </StepButton>
          <Target>
            70.0<TargetUnit>°F</TargetUnit>
          </Target>
          <StepButton type="button" aria-label="Lower temperature">
            <Icon name="chevronDown" />
          </StepButton>
        </SetPoint>
      </ThermoBody>
      <Modes>
        <ModesLabel>Operation</ModesLabel>
        {modes.map((m) => (
          <ModeButton key={m.name} type="button" $active={m.name === "Heat"}>
            <Icon name={m.icon} />
            {m.name}
          </ModeButton>
        ))}
      </Modes>
    </Card>
  );
}

/* ---------- media cards ---------- */

const MediaCard = styled(Card)<{ $on?: boolean }>`
  display: flex;
  background: ${(p) => (p.$on ? color.primary : "#737373")};
`;

const MediaMain = styled.div`
  flex: 1;
`;

const MediaName = styled.div`
  display: flex;
  align-items: center;
  gap: 8px;
  height: 56px;
  padding-left: 16px;
`;

const MediaControls = styled.div`
  display: flex;
  gap: 16px;
  padding: 8px 12px;
`;

const MediaArt = styled.div`
  display: flex;
  align-items: center;
  margin-right: 30px;
  color: rgba(255, 255, 255, 0.2);
`;

const MediaMenu = styled.button`
  display: grid;
  place-items: center;
  width: 40px;
  height: 56px;
  margin-right: 8px;
`;

function MediaPlayer({ name, on }: { name: string; on?: boolean }) {
  return (
    <MediaCard $on={on}>
      <MediaMain>
        <MediaName>
          <Icon name="cast" />
          {name}
        </MediaName>
        {on && (
          <MediaControls>
            <button type="button" aria-label="Power">
              <Icon name="power" size={40} />
            </button>
            <button type="button" aria-label="Play or pause">
              <Icon name="playPause" size={40} />
            </button>
          </MediaControls>
        )}
      </MediaMain>
      {on && (
        <MediaArt>
          <Icon name="movieMusic" size={74} />
        </MediaArt>
      )}
      <MediaMenu type="button" aria-label={`More about ${name}`}>
        <Icon name="dots" />
      </MediaMenu>
    </MediaCard>
  );
}

/* ---------- weather card ---------- */

const CLOUD =
  "M47.7,35.4c0-4.6-3.7-8.2-8.2-8.2c-1,0-1.9,0.2-2.8,0.5c-0.3-3.4-3.1-6.2-6.6-6.2c-3.7,0-6.7,3-6.7,6.7c0,0.8,0.2,1.6,0.4,2.3c-0.3-0.1-0.7-0.1-1-0.1c-3.7,0-6.7,3-6.7,6.7c0,3.6,2.9,6.6,6.5,6.7l17.2,0C44.2,43.3,47.7,39.8,47.7,35.4z";

const Cloud = () => <path d={CLOUD} fill="#57a0ee" stroke="#fff" strokeWidth="1.2" strokeLinejoin="round" />;

function Flake({ x, y }: { x: number; y: number }) {
  return (
    <g transform={`translate(${x} ${y})`} stroke="#57a0ee" strokeWidth="1.1" strokeLinecap="round">
      {[0, 45, 90, 135].map((a) => (
        <line key={a} y1="-2.5" y2="2.5" transform={`rotate(${a})`} />
      ))}
    </g>
  );
}

const BigSky = styled.svg`
  display: block;
  width: 77px;
  height: 81px;
  margin-top: 4px;
`;

const DaySky = styled.svg`
  display: block;
  width: 50px;
  height: 50px;
  margin: 0 auto;
`;

function DayIcon({ kind }: { kind: "rain" | "partly" }) {
  return (
    <DaySky viewBox="3 2 64 64" aria-hidden="true">
      {kind === "partly" && (
        <g transform="translate(18.4 27.2) rotate(-12)" fill="orange" stroke="orange" strokeWidth="2" strokeLinecap="round">
          <circle r="5" />
          {[0, 45, 90, 135, 180, 225, 270, 315].map((a) => (
            <line key={a} y1="9" y2="11" transform={`rotate(${a})`} />
          ))}
        </g>
      )}
      <Cloud />
      {kind === "rain" && (
        <g stroke="#91c0f8" strokeWidth="1.8">
          <path d="M27.6,46.4L28.4,49.4" />
          <path d="M33.6,50L33,54.6" />
        </g>
      )}
    </DaySky>
  );
}

const Current = styled.div`
  display: flex;
  align-items: flex-start;
  height: 100px;
  padding: 16px 28px 0 34px;
`;

const Temperature = styled.div`
  flex: 1;
  text-align: right;
  font-size: 56px;
  font-weight: 300;
  line-height: 58px;
`;

const TemperatureUnit = styled.div`
  padding-left: 8px;
  font-size: 21px;
  font-weight: 300;
  line-height: 30px;
`;

const Details = styled.div`
  display: flex;
  justify-content: space-between;
  padding: 0 28px 15px;
  font-weight: 300;
  line-height: 24px;
`;

const Detail = styled.li<{ $end?: boolean }>`
  display: flex;
  flex-direction: ${(p) => (p.$end ? "row-reverse" : "row")};
  gap: 8px;
  height: 24px;
`;

const Unit = styled.span`
  font-size: 11px;
  line-height: 12px;
`;

const Forecast = styled.ul`
  display: grid;
  grid-template-columns: repeat(5, minmax(0, 1fr));
  padding: 0 13px 18px;
`;

const Day = styled.li`
  min-height: 162px;
  text-align: center;
  line-height: 28px;
  border-right: 1px solid #dcdcdc;
  &:last-child { border-right-color: transparent; }
`;

const Low = styled.div`
  color: ${color.gold};
  font-weight: 300;
`;

const Rain = styled.div`
  font-weight: 300;
`;

const days: { day: string; kind: "rain" | "partly"; hi: number; lo: number; rain?: string }[] = [
  { day: "MON", kind: "rain", hi: 41, lo: 27, rain: "1.3 in" },
  { day: "TUE", kind: "partly", hi: 35, lo: 25 },
  { day: "WED", kind: "partly", hi: 44, lo: 31 },
  { day: "THU", kind: "rain", hi: 32, lo: 13, rain: "0.2 in" },
  { day: "FRI", kind: "partly", hi: 24, lo: 11 },
];

function Weather() {
  return (
    <Card>
      <Current>
        <BigSky viewBox="15 20 35 37" preserveAspectRatio="xMinYMin" aria-hidden="true">
          <Cloud />
          <Flake x={21.7} y={49.2} />
          <Flake x={31.2} y={51.7} />
          <Flake x={40} y={49.2} />
        </BigSky>
        <Temperature>33</Temperature>
        <TemperatureUnit>°F</TemperatureUnit>
      </Current>
      <Details>
        <ul>
          <Detail>
            <Icon name="humidity" />
            <span>84 <Unit>%</Unit></span>
          </Detail>
          <Detail>
            <Icon name="gauge" />
            <span>29.32 <Unit>inHg</Unit></span>
          </Detail>
          <Detail>
            <Icon name="sunrise" />
            <span>7:15:38 AM</span>
          </Detail>
        </ul>
        <ul>
          <Detail $end>
            <Icon name="wind" />
            <span>SW 14.92 <Unit>mi/h</Unit></span>
          </Detail>
          <Detail $end>
            <Icon name="fog" />
            <span>10 <Unit>mi</Unit></span>
          </Detail>
          <Detail $end>
            <Icon name="sunset" />
            <span>5:00:27 PM</span>
          </Detail>
        </ul>
      </Details>
      <Forecast>
        {days.map((d) => (
          <Day key={d.day}>
            <div>{d.day}</div>
            <DayIcon kind={d.kind} />
            <Strong>{d.hi}°F</Strong>
            <Low>{d.lo}°F</Low>
            {d.rain && <Rain>{d.rain}</Rain>}
          </Day>
        ))}
      </Forecast>
    </Card>
  );
}

/* ---------- data ---------- */

const nav = [
  { name: "Overview", icon: "dashboard" },
  { name: "Energy", icon: "bolt" },
  { name: "Map", icon: "map" },
  { name: "Logbook", icon: "logbook" },
  { name: "History", icon: "history" },
  { name: "HACS", icon: "hacs" },
  { name: "Media Browser", icon: "media" },
];

const tools = [
  { name: "Developer Tools", icon: "hammer" },
  { name: "Configuration", icon: "cog" },
];

const tabs = [
  { name: "Ground floor", icon: "floor0" },
  { name: "First floor", icon: "floor1" },
  { name: "Cameras", icon: "cctv" },
  { name: "Network", icon: "server" },
  { name: "Remote one", icon: "remote" },
  { name: "Remote two", icon: "remote" },
];

const familyRoom: Entity[] = [
  { name: "Family Room Light", icon: "ceilingLight", tint: color.goldDim, on: true },
  { name: "Family Room Track Light", icon: "trackLight", tint: color.gold, on: true },
  { name: "Floor Lamp", icon: "floorLamp", on: false },
  { name: "Patio Light", icon: "spotlight", on: false },
  { name: "Family Room Motion Sensor", icon: "walk", state: "Clear" },
  { name: "Backyard Door", icon: "doorClosed", state: "Closed" },
  {
    name: "Centralite Thermostat",
    icon: "thermostat",
    state: (
      <>
        <Strong>Idle (Heat)</Strong> 70 °F
        <Dim>Currently: 70.9 °F</Dim>
      </>
    ),
  },
];

const powderRoom: Entity[] = [
  { name: "Powder Room Light", icon: "sconce", on: false },
  { name: "Powder Room Fan", icon: "fan", on: false },
  { name: "Powder Room Motion Sensor", icon: "home", state: "Clear" },
];

const foyer: Entity[] = [
  { name: "Porch Light", icon: "coachLamp", on: true },
  { name: "Porch Outdoor Outlet", icon: "outlet", on: true },
  { name: "Foyer Light", icon: "chandelier", on: false },
  { name: "Front Door Sensor", icon: "doorClosed", state: "Closed" },
  { name: "First Alert Smoke Alarm", icon: "check", state: "Clear" },
  { name: "First Alert CO Alarm", icon: "check", state: "Clear" },
];

const kitchen: Entity[] = [
  { name: "Kitchen Lights", icon: "group", on: true },
  { name: "Under Cabinet Lights", icon: "group", on: true },
  { name: "Kitchen Pendant Light", icon: "group", on: false },
  { name: "Dining Room Light", icon: "ceilingLight", on: false },
  { name: "Kitchen Warm Light", icon: "palette", scene: true },
  { name: "Kitchen Daylight", icon: "palette", scene: true },
];

const livingRoom: Entity[] = [1, 2, 3].map((n) => ({
  name: `Living Room Light - ${n}`,
  icon: "recessed",
  on: false,
}));

const mudroom: Entity[] = [
  { name: "Mudroom Light", icon: "ceilingLight", on: false },
  { name: "Side Yard Light", icon: "coachLamp", on: false },
  { name: "Sideyard Door Sensor", icon: "doorClosed", state: "Closed" },
  { name: "Garage Door", icon: "doorOpen", state: "Open" },
  { name: "Mudroom Temperature", icon: "thermometer", state: "72.1 °F" },
  { name: "Mudroom Humidity", icon: "humidity", state: "39.4 %" },
  { name: "Mudroom Pressure", icon: "gauge", state: "989 hPa" },
  { name: "Mudroom Motion Sensor", icon: "walk", state: "Clear" },
];

export default function App() {
  return (
    <>
      <GlobalStyle />
      <Shell>
        <Sidebar>
          <Brand>
            <MenuButton type="button" aria-label="Collapse sidebar">
              <Icon name="menuOpen" />
            </MenuButton>
            Home Assistant
          </Brand>
          <NavList $grow>
            {nav.map((n, i) => (
              <li key={n.name}>
                <NavLink href="#" $active={i === 0}>
                  <Icon name={n.icon} />
                  <NavText>{n.name}</NavText>
                </NavLink>
              </li>
            ))}
          </NavList>
          <NavList>
            {tools.map((n) => (
              <li key={n.name}>
                <NavLink href="#">
                  <Icon name={n.icon} />
                  <NavText>{n.name}</NavText>
                </NavLink>
              </li>
            ))}
          </NavList>
          <NavFooter>
            <li>
              <NavLink href="#">
                <Icon name="bell" />
                <NavText>Notifications</NavText>
                <Badge>1</Badge>
              </NavLink>
            </li>
          </NavFooter>
        </Sidebar>
        <div>
          <TopBar>
            <Tabs>
              {tabs.map((t, i) => (
                <Tab key={t.name} type="button" aria-label={t.name} $active={i === 0}>
                  <Icon name={t.icon} />
                </Tab>
              ))}
            </Tabs>
            <OverflowButton type="button" aria-label="More options">
              <Icon name="dots" />
            </OverflowButton>
          </TopBar>
          <Board>
            <Column>
              <Glance
                items={[
                  { name: "Front Door", icon: "lock", state: "Locked" },
                  { name: "Garage Door", icon: "lock", state: "Locked" },
                  { name: "Side Door", icon: "lock", state: "Locked" },
                  { name: "Edison Alarm", icon: "shieldOff", state: "Disarmed", tint: color.green },
                ]}
              />
              <Glance
                items={[
                  { name: "Garage Door - VW", icon: "garage", state: "Closed" },
                  { name: "Garage Door - Volvo", icon: "garage", state: "Closed" },
                ]}
              />
              <Room title="Family Room" on items={familyRoom} />
              <Room title="Powder Room" on={false} items={powderRoom} />
              <Weather />
            </Column>
            <Column>
              <Glance
                items={[
                  { name: "Ramachandren", icon: "account", state: "Home" },
                  { name: "Swathi Sudarshan", icon: "account", state: "Home" },
                ]}
              />
              <Thermostat />
              <MediaPlayer name="Living Room" />
              <MediaPlayer name="onkyo" on />
              <Room title="Foyer" on items={foyer} />
            </Column>
            <Column>
              <Room title="Kitchen" on items={kitchen} />
              <Room title="Living Room" on={false} items={livingRoom} />
              <Room title="Mudroom" on={false} items={mudroom} />
            </Column>
          </Board>
        </div>
      </Shell>
    </>
  );
}
